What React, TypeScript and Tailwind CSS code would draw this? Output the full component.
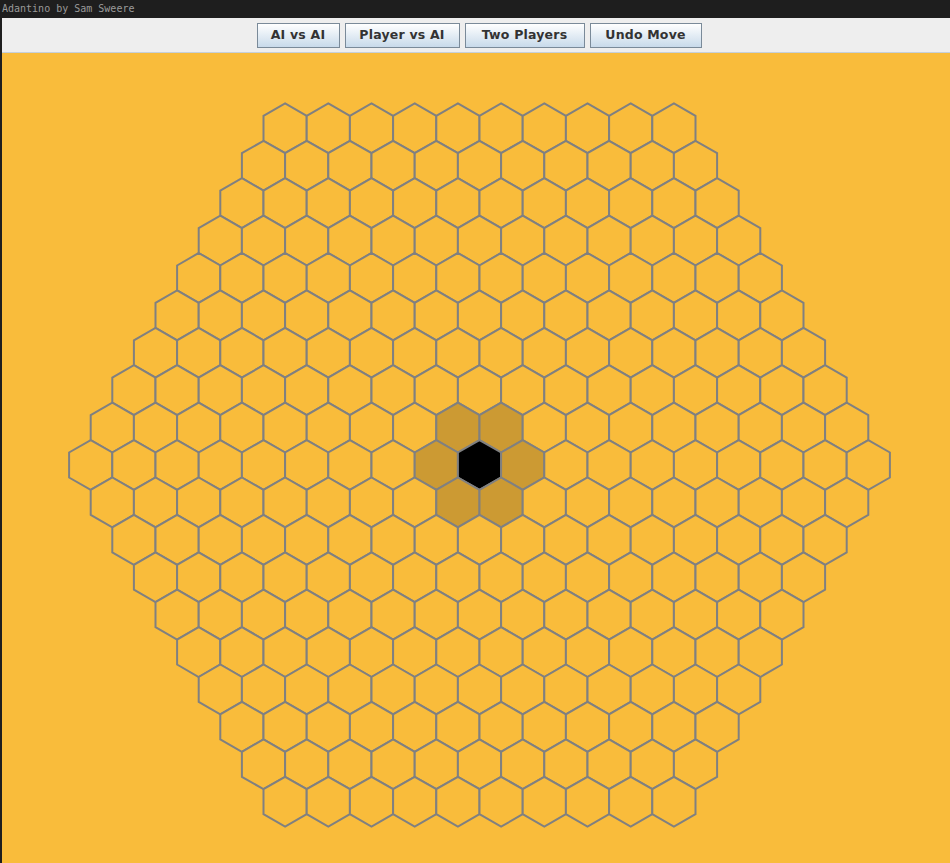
import React from "react";

// board geometry (pointy-top hexes, hex-shaped board of side 10)
const W = 43.2;
const S = W / Math.sqrt(3);
const CX = 477.5;
const CY = 412;

type Hex = { key: string; x: number; y: number; fill: string };

const buildBoard = (): Hex[] => {
  const hexes: Hex[] = [];
  for (let r = -9; r <= 9; r++) {
    const count = 19 - Math.abs(r);
    const y = CY + r * S * 1.5;
    for (let i = 0; i < count; i++) {
      const x = CX + (i - (count - 1) / 2) * W;
      const dx = Math.round((x - CX) / (W / 2));
      let fill = "#f9bc3b";
      if (r === 0 && dx === 0) fill = "#000000";
      else if ((r === 0 && Math.abs(dx) === 2) || (Math.abs(r) === 1 && Math.abs(dx) === 1)) fill = "#cc9a33";
      hexes.push({ key: `${r}-${i}`, x, y, fill });
    }
  }
  return hexes;
};

const hexPoints = (x: number, y: number) => {
  const h = W / 2;
  return [
    [x, y - S],
    [x + h, y - S / 2],
    [x + h, y + S / 2],
    [x, y + S],
    [x - h, y + S / 2],
    [x - h, y - S / 2],
  ]
    .map((p) => `${p[0].toFixed(1)},${p[1].toFixed(1)}`)
    .join(" ");
};

const ToolButton = ({ label, width }: { label: string; width: string }) => (
  <button
    className={`${width} h-[25px] border border-[#7a8a99] bg-gradient-to-b from-white to-[#c8daea] text-[12.5px] font-bold text-[#333333] tracking-[0.2px]`}
    style={{ fontFamily: '"DejaVu Sans", sans-serif' }}
  >
    {label}
  </button>
);

const App = () => {
  const hexes = buildBoard();
  return (
    <div className="w-[950px] h-[863px] flex flex-col bg-[#1e1e1e] overflow-hidden">
      {/* title bar */}
      <div className="h-[18px] flex items-center px-[2px] text-[10px] text-[#9a9a9a] font-['DejaVu_Sans_Mono',monospace] leading-none">
        Adantino by Sam Sweere
      </div>

      <div className="flex-1 flex flex-col ml-[2px]">
        {/* toolbar */}
        <div className="h-[35px] bg-[#eeeeee] border-b border-[#c6d0da] flex justify-center items-start pt-[5px] gap-[5px] pl-[6px]">
          <ToolButton label="AI vs AI" width="w-[83px]" />
          <ToolButton label="Player vs AI" width="w-[115px]" />
          <ToolButton label="Two Players" width="w-[120px]" />
          <ToolButton label="Undo Move" width="w-[112px]" />
        </div>

        {/* board */}
        <div className="flex-1 bg-[#f9bc3b]">
          <svg width="948" height="809" viewBox="0 0 948 809" className="block">
            {hexes.map((h) => (
              <polygon
                key={h.key}
                points={hexPoints(h.x, h.y)}
                fill={h.fill}
                stroke="#808080"
                strokeWidth={2}
                strokeLinejoin="miter"
              />
            ))}
          </svg>
        </div>
      </div>
    </div>
  );
};

export default App;
